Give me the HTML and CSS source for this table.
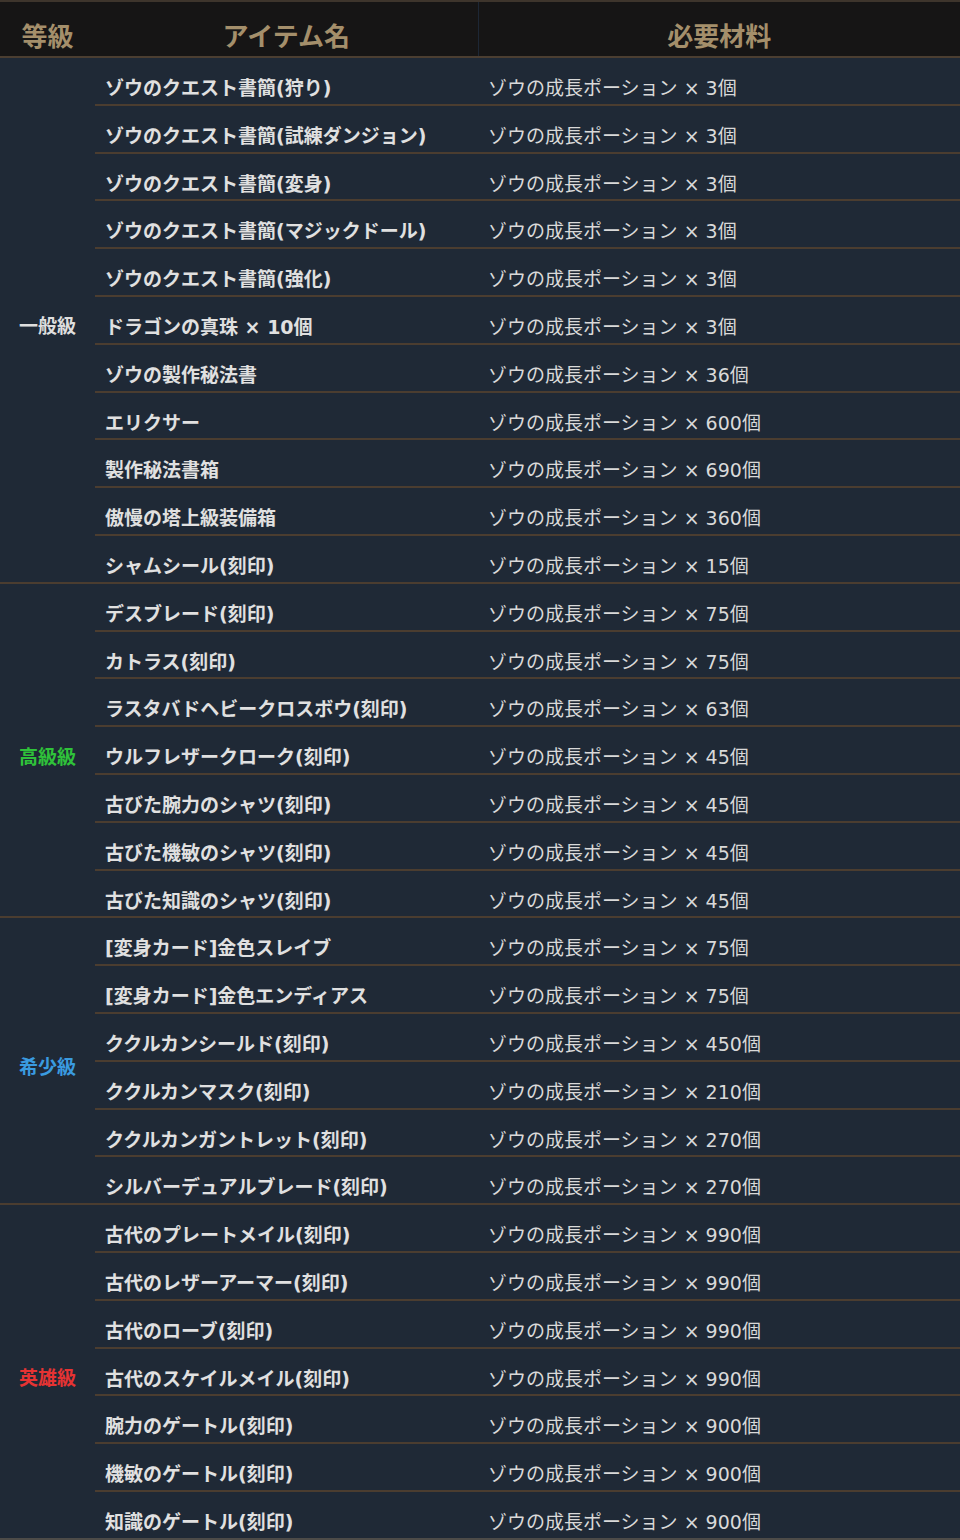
FILE: index.html
```html
<!DOCTYPE html>
<html lang="ja">
<head>
<meta charset="utf-8">
<title>ゾウの成長ポーション 交換表</title>
<link rel="stylesheet" href="styles.css">
</head>
<body>
<table class="tbl">
  <colgroup>
    <col class="c-grade">
    <col class="c-item">
    <col class="c-mat">
  </colgroup>
  <thead>
    <tr>
      <th class="h-grade">等級</th>
      <th class="h-item">アイテム名</th>
      <th class="h-mat">必要材料</th>
    </tr>
  </thead>
  <tbody>
    <tr><td class="grade normal" rowspan="11">一般級</td><td class="item">ゾウのクエスト書簡(狩り)</td><td class="mat">ゾウの成長ポーション × 3個</td></tr>
    <tr><td class="item">ゾウのクエスト書簡(試練ダンジョン)</td><td class="mat">ゾウの成長ポーション × 3個</td></tr>
    <tr><td class="item">ゾウのクエスト書簡(変身)</td><td class="mat">ゾウの成長ポーション × 3個</td></tr>
    <tr><td class="item">ゾウのクエスト書簡(マジックドール)</td><td class="mat">ゾウの成長ポーション × 3個</td></tr>
    <tr><td class="item">ゾウのクエスト書簡(強化)</td><td class="mat">ゾウの成長ポーション × 3個</td></tr>
    <tr><td class="item">ドラゴンの真珠 × 10個</td><td class="mat">ゾウの成長ポーション × 3個</td></tr>
    <tr><td class="item">ゾウの製作秘法書</td><td class="mat">ゾウの成長ポーション × 36個</td></tr>
    <tr><td class="item">エリクサー</td><td class="mat">ゾウの成長ポーション × 600個</td></tr>
    <tr><td class="item">製作秘法書箱</td><td class="mat">ゾウの成長ポーション × 690個</td></tr>
    <tr><td class="item">傲慢の塔上級装備箱</td><td class="mat">ゾウの成長ポーション × 360個</td></tr>
    <tr><td class="item">シャムシール(刻印)</td><td class="mat">ゾウの成長ポーション × 15個</td></tr>

    <tr><td class="grade high" rowspan="7">高級級</td><td class="item">デスブレード(刻印)</td><td class="mat">ゾウの成長ポーション × 75個</td></tr>
    <tr><td class="item">カトラス(刻印)</td><td class="mat">ゾウの成長ポーション × 75個</td></tr>
    <tr><td class="item">ラスタバドヘビークロスボウ(刻印)</td><td class="mat">ゾウの成長ポーション × 63個</td></tr>
    <tr><td class="item">ウルフレザークローク(刻印)</td><td class="mat">ゾウの成長ポーション × 45個</td></tr>
    <tr><td class="item">古びた腕力のシャツ(刻印)</td><td class="mat">ゾウの成長ポーション × 45個</td></tr>
    <tr><td class="item">古びた機敏のシャツ(刻印)</td><td class="mat">ゾウの成長ポーション × 45個</td></tr>
    <tr><td class="item">古びた知識のシャツ(刻印)</td><td class="mat">ゾウの成長ポーション × 45個</td></tr>

    <tr><td class="grade rare" rowspan="6">希少級</td><td class="item">[変身カード]金色スレイブ</td><td class="mat">ゾウの成長ポーション × 75個</td></tr>
    <tr><td class="item">[変身カード]金色エンディアス</td><td class="mat">ゾウの成長ポーション × 75個</td></tr>
    <tr><td class="item">ククルカンシールド(刻印)</td><td class="mat">ゾウの成長ポーション × 450個</td></tr>
    <tr><td class="item">ククルカンマスク(刻印)</td><td class="mat">ゾウの成長ポーション × 210個</td></tr>
    <tr><td class="item">ククルカンガントレット(刻印)</td><td class="mat">ゾウの成長ポーション × 270個</td></tr>
    <tr><td class="item">シルバーデュアルブレード(刻印)</td><td class="mat">ゾウの成長ポーション × 270個</td></tr>

    <tr><td class="grade hero" rowspan="7">英雄級</td><td class="item">古代のプレートメイル(刻印)</td><td class="mat">ゾウの成長ポーション × 990個</td></tr>
    <tr><td class="item">古代のレザーアーマー(刻印)</td><td class="mat">ゾウの成長ポーション × 990個</td></tr>
    <tr><td class="item">古代のローブ(刻印)</td><td class="mat">ゾウの成長ポーション × 990個</td></tr>
    <tr><td class="item">古代のスケイルメイル(刻印)</td><td class="mat">ゾウの成長ポーション × 990個</td></tr>
    <tr><td class="item">腕力のゲートル(刻印)</td><td class="mat">ゾウの成長ポーション × 900個</td></tr>
    <tr><td class="item">機敏のゲートル(刻印)</td><td class="mat">ゾウの成長ポーション × 900個</td></tr>
    <tr class="last-row"><td class="item">知識のゲートル(刻印)</td><td class="mat">ゾウの成長ポーション × 900個</td></tr>
  </tbody>
</table>
</body>
</html>
```

FILE: styles.css
```css
html, body {
  margin: 0;
  padding: 0;
  background: #1f2936;
}

body {
  font-family: "Noto Sans CJK JP", "Noto Sans", "Liberation Sans", sans-serif;
  color: #dcdcdc;
}

.tbl {
  width: 960px;
  border-collapse: collapse;
  table-layout: fixed;
  background: #1f2936;
}

.c-grade { width: 95px; }
.c-item { width: 383px; }
.c-mat { width: 482px; }

.tbl th {
  background: #161515;
  color: #a48f6b;
  font-size: 26px;
  font-weight: 700;
  line-height: 32px;
  padding: 17px 0 5px;
  text-align: center;
  border-top: 2px solid #3e352c;
  border-bottom: 2px solid #4b3e31;
}

.tbl th.h-mat {
  border-left: 1px solid #1d2735;
}

.tbl td {
  font-family: "DejaVu Sans", "Noto Sans CJK JP", sans-serif;
  font-size: 19px;
  line-height: 23.8px;
  padding: 19px 10px 3px;
  vertical-align: top;
  white-space: nowrap;
}

.tbl td.item,
.tbl td.mat {
  border-bottom: 2px solid #4b3d30;
}

.tbl td.item {
  font-weight: 700;
  color: #e0e0e0;
}

.tbl td.mat {
  font-weight: 400;
  color: #d9d9d9;
}

.tbl td.grade {
  font-family: "Noto Sans CJK JP", sans-serif;
  text-align: center;
  vertical-align: middle;
  font-weight: 700;
  padding: 11px 0 0;
  border-bottom: 2px solid #4b3d30;
}

.grade.normal { color: #dedede; }
.grade.high { color: #2fc23a; }
.grade.rare { color: #3a9be0; }
.grade.hero { color: #e63333; }

.tbl tr.last-row td,
.tbl td.grade.hero {
  border-bottom-color: #4d4b48;
}
```
